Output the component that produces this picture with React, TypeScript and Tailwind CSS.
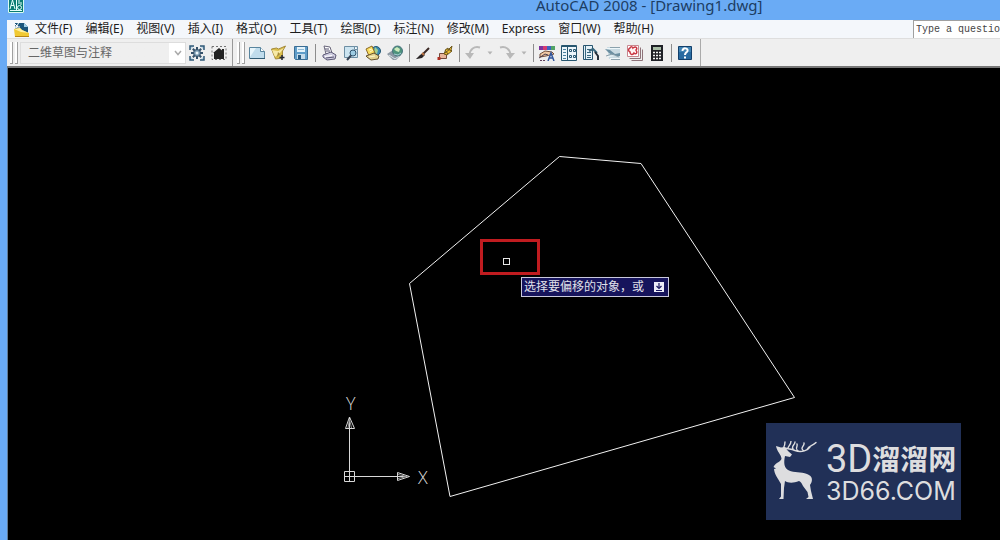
import type { ReactNode } from "react";

const menus = [
  "文件(F)",
  "编辑(E)",
  "视图(V)",
  "插入(I)",
  "格式(O)",
  "工具(T)",
  "绘图(D)",
  "标注(N)",
  "修改(M)",
  "Express",
  "窗口(W)",
  "帮助(H)",
];

function Icon({ children }: { children: ReactNode }) {
  return (
    <svg viewBox="0 0 16 16" className="size-4 shrink-0" fill="none" aria-hidden="true">
      {children}
    </svg>
  );
}

function Tool({ label, children }: { label: string; children: ReactNode }) {
  return (
    <button type="button" aria-label={label} className="flex h-6 w-[22px] shrink-0 items-center justify-center">
      {children}
    </button>
  );
}

function Drop({ label }: { label: string }) {
  return (
    <button type="button" aria-label={label} className="flex h-6 w-3 shrink-0 items-center justify-center">
      <svg viewBox="0 0 6 4" className="h-1 w-1.5" aria-hidden="true">
        <path d="M0.5 0.5h5L3 3.5z" fill="#b4b4b4" />
      </svg>
    </button>
  );
}

function Separator() {
  return (
    <span className="flex w-1.5 shrink-0 justify-center">
      <span className="h-[18px] w-px bg-[#8c8c8c]" />
    </span>
  );
}

function Grip() {
  return (
    <span className="flex shrink-0 gap-0.5">
      <span className="h-[22px] w-[3px] border-r border-b border-[#a0a0a0] bg-white" />
      <span className="h-[22px] w-[3px] border-r border-b border-[#a0a0a0] bg-white" />
    </span>
  );
}

function AppIcon() {
  return (
    <svg viewBox="0 0 16 13" className="h-[13px] w-4" aria-hidden="true">
      <path d="M0 0h16v13H0z" fill="#0b7c73" />
      <path d="M0.5 0v12.5h15V0" fill="none" stroke="#d9fbf4" />
      <path d="M2 9 4.500 0 7 9M3 5.500h3M8.500 0v10M2 10.500h12M11 0v4M13 2v3" stroke="#e6fffa" fill="none" />
      <circle cx="11.500" cy="7.500" r="2" stroke="#e6fffa" fill="#0b7c73" />
    </svg>
  );
}

function DrawingIcon() {
  return (
    <svg viewBox="0 0 15 15" className="size-[15px] shrink-0" aria-hidden="true">
      <path d="M1 1h9l4 4v8H2z" fill="#1b557c" />
      <path d="M10 1v4h4z" fill="#9fd0e8" />
      <path d="M1 2l3 3M5 0 2 6M1 5h5" stroke="#fff" />
      <path d="M0 7l6-1 2 2 7 3v4H1z" fill="#f0c933" />
      <path d="M0 7l6-1 2 2 7 3-8-1z" fill="#fff0a0" />
      <path d="M1 14.500h14" stroke="#b98516" />
    </svg>
  );
}

function StandardTools() {
  return (
    <div className="flex items-center">
      <Tool label="新建">
        <Icon>
          <path d="M0.500 2.500h11l4 4v7H0.500z" fill="#c0dcec" stroke="#59859e" />
          <path d="M1 3h6L1 12z" fill="#e8f5fb" />
          <path d="M11.500 2.500v4h4" fill="#fff" stroke="#59859e" />
          <path d="M1 13.500h15" stroke="#315b74" />
        </Icon>
      </Tool>
      <Tool label="打开">
        <Icon>
          <path d="M0.500 4l5-1 2 1 7-3-3 5 0 7-7 1z" fill="#d9bd4b" stroke="#a58a3a" />
          <path d="M1 5l6 1 6-3-4 5-5 4z" fill="#f7e9a6" />
          <path d="M7 7l2 2-3 3z" fill="#a58a3a" />
          <path d="M11 10v5M8.500 12.500h5" stroke="#232733" strokeWidth="1.500" />
        </Icon>
      </Tool>
      <Tool label="保存">
        <Icon>
          <path d="M1.500 1.500h13v13h-12l-1-1z" fill="#5f9dc9" stroke="#3a6d94" />
          <path d="M4 2h8v5H4z" fill="#e4f3fb" />
          <path d="M4 9h8v5H4z" fill="#c5dbea" />
          <path d="M5 10h3v4H5z" fill="#245982" />
          <path d="M5 4.500h6" stroke="#90bad5" />
        </Icon>
      </Tool>
      <Separator />
      <Tool label="打印">
        <Icon>
          <path d="M3 1l6 1 2 6-6 1z" fill="#fff" stroke="#686579" />
          <path d="M2 10l8-3 5 3-1 4-8 1-4-3z" fill="#cfcde0" stroke="#5a5774" />
          <path d="M4 4h4M5 6h4M5 13l8-1" stroke="#55516f" />
          <path d="M4 11.500l7-1" stroke="#fff" />
        </Icon>
      </Tool>
      <Tool label="打印预览">
        <Icon>
          <path d="M1.500 1.500h13v11h-13z" fill="#cce4f0" stroke="#6d8ea3" />
          <path d="M11.500 1.500v3h3" fill="#fff" stroke="#6d8ea3" />
          <circle cx="10" cy="8" r="3" fill="#9dcbe2" stroke="#31536d" />
          <path d="M8 10.500 4 15" stroke="#364355" strokeWidth="2" />
        </Icon>
      </Tool>
      <Tool label="发布">
        <Icon>
          <circle cx="11" cy="6" r="4.500" fill="#3888b1" stroke="#245874" />
          <path d="M10 2l3 3-1 4-3-2z" fill="#a3cf90" />
          <path d="M1 4l6-3 3 7-6 3z" fill="#f9dc5e" stroke="#8b6925" />
          <path d="M1 11l8-3 5 3-1 3-7 1-4-3z" fill="#e3d28f" stroke="#65512b" />
          <path d="M4 5l3-1M5 7l3-2M4 12l6-1" stroke="#fff7cc" />
        </Icon>
      </Tool>
      <Tool label="三维 DWF">
        <Icon>
          <path d="M0 9l6-4 8 5-5 5H6z" fill="#8d98a3" />
          <path d="M2 10l6 4 4-3" stroke="#dbe7eb" />
          <circle cx="10.500" cy="6" r="5" fill="#4e937c" stroke="#4b7480" />
          <path d="M7 4l3-2 3 2-1 3-3-1z" fill="#cdeabd" />
          <path d="M7 9l4 1 3-2" stroke="#a7cfd6" />
        </Icon>
      </Tool>
      <Separator />
      <Tool label="特性匹配">
        <Icon>
          <path d="M14 3 8 9" stroke="#3b2925" strokeWidth="2" />
          <path d="M8 8l2 2-3 3-5 1H1l4-4z" fill="#292425" />
          <path d="M7 8l2 2" stroke="#be7544" strokeWidth="2" />
        </Icon>
      </Tool>
      <Tool label="块编辑器">
        <Icon>
          <path d="M2.500 8.500h7v5h-7z" fill="#e8b59b" stroke="#72483b" />
          <path d="M0.500 12h3v3h-3z" fill="#af2f23" />
          <path d="M7 9l2-5 3 0 3-3-1 4 1 1-5 4z" fill="#edbd31" stroke="#6d581e" />
          <path d="M8 8l5-4M10 3l4 3M8 5l3 4" stroke="#6d581e" />
        </Icon>
      </Tool>
      <Separator />
      <Tool label="放弃">
        <Icon>
          <path d="M15 2.500C9 1 5 4 4.500 10" stroke="#b9b9b9" strokeWidth="2" />
          <path d="M0 8l5 6 4-6z" fill="#b9b9b9" />
        </Icon>
      </Tool>
      <Drop label="放弃列表" />
      <Tool label="重做">
        <Icon>
          <path d="M1 2.500c6-1.500 10 1.500 10.500 7.500" stroke="#b9b9b9" strokeWidth="2" />
          <path d="M16 8l-5 6-4-6z" fill="#b9b9b9" />
        </Icon>
      </Tool>
      <Drop label="重做列表" />
      <Separator />
      <Tool label="特性">
        <Icon>
          <path d="M0 1h4v4H0z" fill="#7c329e" />
          <path d="M4 1h4v4H4z" fill="#d23b72" />
          <path d="M8 1h4v4H8z" fill="#3c63c0" />
          <path d="M12 1h4v4h-4z" fill="#52a366" />
          <path d="M1 9l5-3 7 1 2 2-8 2-6 1z" fill="#f0c9a4" stroke="#74503d" />
          <path d="M0 13l6-4 3 1" stroke="#4b3d4d" />
          <path d="M9 16l3-8 3 8M10 13h4" stroke="#30549c" strokeWidth="1.500" />
          <path d="M1 15.500h6" stroke="#60405c" strokeDasharray="2 1" />
        </Icon>
      </Tool>
      <Tool label="设计中心">
        <Icon>
          <path d="M.5 .5h15v15H.5z" fill="#ecf5fa" stroke="#27566f" />
          <path d="M6.500 1v14M1 1.500h15" stroke="#27566f" />
          <path d="M2 4.500h3M2 7.500h3M2 10.500h3M2 13.500h3" stroke="#4a829f" />
          <path d="M8.500 4.500h2v2h-2zM12.500 4.500h2v2h-2zM8.500 10.500h2v2h-2zM12.500 10.500h2v2h-2z" stroke="#275670" />
        </Icon>
      </Tool>
      <Tool label="工具选项板">
        <Icon>
          <path d="M.5 .5h9v14h-9z" fill="#e5f1f8" stroke="#275570" />
          <path d="M2.500 1v13M4 4.500h4M4 7.500h4M4 10.500h4M4 12.500h4" stroke="#39677e" />
          <path d="M6 6l4-2 4 4" stroke="#39677e" strokeWidth="2" />
          <path d="M12 7l3 4v4" stroke="#27303b" strokeWidth="2" />
        </Icon>
      </Tool>
      <Tool label="图纸集管理器">
        <Icon>
          <path d="M2 2h13v12H4z" fill="#c9dae2" />
          <path d="M0 4l5 1 5 4 5-1v3H9L4 8z" fill="#698da0" />
          <path d="M2 3.500h13M3 11.500l7-1M5 13.500h10" stroke="#eef7fa" />
          <path d="M5 2.500h10M1 11l6-2 7 3M6 14.500h9" stroke="#8ba1ac" />
        </Icon>
      </Tool>
      <Tool label="标记集管理器">
        <Icon>
          <path d="M2.500 13.500h11v-11M4.500 15.500h11v-11" stroke="#8e7278" />
          <path d="M.5 .5h11v11H.5z" fill="#fff" stroke="#c9868e" />
          <path d="M3 3c1-2 3-1 3 0 3-2 5 0 3 2 2 3 0 5-2 3-2 3-4 1-4-1-2-1-2-3 0-4z" fill="#fff4f4" stroke="#c93642" strokeWidth="1.500" />
        </Icon>
      </Tool>
      <Tool label="快速计算器">
        <Icon>
          <path d="M2 0h12v16H2z" fill="#202127" />
          <path d="M4 2h8v3H4z" fill="#a9bda6" />
          <path d="M4 7.500h8M4 10.500h8M4 13.500h8" stroke="#f5f5f5" strokeWidth="1.500" strokeDasharray="2 1" />
        </Icon>
      </Tool>
      <Separator />
      <Tool label="帮助">
        <Icon>
          <path d="M1.500 1.500h13v13h-13z" fill="#286aa0" stroke="#123f6b" />
          <path d="M2 2h12v5H2z" fill="#3f82b2" />
          <path d="M5.500 6c0-4 6-3 5 0-.5 1.500-2.500 1.500-2.500 4M8 11.500v2" stroke="#fff" strokeWidth="2" />
        </Icon>
      </Tool>
    </div>
  );
}

function Deer() {
  return (
    <svg viewBox="0 0 46 62" className="h-[62px] w-[46px] shrink-0" aria-hidden="true">
      <path
        d="M3 5 8 6.500 12 6 15 10 19 13.500 17 16 12 15C10.500 22 11 27 16 29.500 21 32 28 30.500 34 33 40 35 40 40 37 44L38 50 40 58H33L35.500 56 34.500 51 30 45C28.500 42 28 41 26 40 20 42.500 15 42 12 40L11 47 10.500 58H6L8 55.500 8 43C5 37 1.500 34 1 28L3 27.500.5 26C3 21 8 21 8.500 17.500 8 13 4 11 3 5z"
        fill="#dddddf"
      />
      <path
        d="M11 7C16 8 19 8 22 9.500 29 12 35 9 37 6M10.500 7C12 4 12 3 12 1M15 7.500C15 5 18 4 18 0M20 8C18 5 22 4 22 1M26 10.500C21 8 25 6 24 3M31 10C26 7 32 5 31 2M34 8.500C36 4 40 5 43 1.500"
        fill="none"
        stroke="#dddddf"
        strokeWidth="1.400"
        strokeLinecap="round"
      />
    </svg>
  );
}

function DrawingCanvas() {
  return (
    <main className="relative min-h-[472px] flex-1 overflow-hidden bg-black">
      <svg className="absolute top-0 left-0 h-[472px] w-[992px]" viewBox="8 68 992 472" fill="none" aria-label="模型空间">
        <path d="M559.500 156.500 641 163.500 794.500 397.500 450 496.500 409.500 283.500z" stroke="#f2f2f2" />
        <g stroke="#d8d8d8">
          <path d="M349.500 481V429M345 476.500h52M344.500 471.500h10v10h-10z" />
          <path d="M349.500 417 345.500 428.500h9zM349.500 418v10M397.500 472.500v8l12-4zM398 476.500h9" />
          <path d="M348 428l1.500-9 2 9M398 474.500l9 2-9 2" stroke="#8f8f8f" />
        </g>
      </svg>
      <span className="absolute top-[327px] left-[338px] font-['Open_Sans',sans-serif] text-lg leading-4 font-light text-[#d8d8d8]">Y</span>
      <span className="absolute top-[401px] left-[410px] font-['Open_Sans',sans-serif] text-lg leading-4 font-light text-[#d8d8d8]">X</span>
      <div className="absolute top-[171px] left-[472px] flex h-[36px] w-[60px] border-[3px] border-[#c01c20]">
        <span className="mt-4 ml-5 size-[7px] border border-[#e8e8e8]" />
      </div>
      <div className="absolute top-[209px] left-[513px] flex h-5 w-[148px] items-center justify-between border border-[#c9c9dd] bg-[#16145c] pr-1 pl-0.5 text-xs text-[#e0e0ea]">
        <span className="whitespace-nowrap">选择要偏移的对象，或</span>
        <svg viewBox="0 0 10 10" className="size-[10px] shrink-0" aria-hidden="true">
          <path d="M0 0h10v10H0z" fill="#ededf8" />
          <path d="M5 1v4M2.500 4 5 6.500 7.500 4M2 8.500h6" stroke="#16145c" fill="none" strokeWidth="1.200" />
        </svg>
      </div>
      <div className="absolute right-[39px] bottom-5 flex h-[97px] w-[195px] items-start bg-[#213057] pt-4 pl-[7px] text-[#dddddf]">
        <div className="pt-0.5">
          <Deer />
        </div>
        <div className="ml-[7px] whitespace-nowrap">
          <div className="flex h-10 items-center">
            <span className="font-[Roboto,sans-serif] text-[38px] leading-10">3D</span>
            <span className="text-[28px] leading-10 font-bold">溜溜网</span>
          </div>
          <div className="font-[Inter,sans-serif] text-[25px] leading-6">3D66.COM</div>
        </div>
      </div>
    </main>
  );
}

export default function App() {
  return (
    <div className="flex min-h-screen flex-col overflow-hidden bg-[#6aabf5] font-['Noto_Sans','Noto_Sans_CJK_SC',sans-serif] text-xs text-[#1c1c1c]">
      <header className="flex h-5 items-start overflow-hidden pl-2">
        <AppIcon />
        <h1 className="ml-[512px] -mt-[5px] text-[15px] leading-5 whitespace-nowrap text-[#1d3d63]">AutoCAD 2008 - [Drawing1.dwg]</h1>
      </header>
      <div className="flex flex-1 flex-col border-l-[7px] border-[#6aabf5]">
        <nav className="flex h-[18px] items-center bg-[#f4f7fb] pl-[7px]">
          <DrawingIcon />
          <div className="ml-1.5 flex gap-[13px]">
            {menus.map((menu) => (
              <button key={menu} type="button" className="leading-[18px] whitespace-nowrap">
                {menu}
              </button>
            ))}
          </div>
          <input
            type="text"
            aria-label="Type a question for help"
            placeholder="Type a question for help"
            className="ml-auto h-[18px] w-[87px] border-t border-l border-[#a0a0a0] bg-white pl-0.5 font-['Liberation_Mono',monospace] text-[10px] text-[#444] outline-none placeholder:text-[#444]"
          />
        </nav>
        <div className="flex h-[30px] items-center border-t border-b-2 border-t-[#dedede] border-b-[#777] bg-[#efefef]">
          <div className="flex h-[27px] items-center border-r border-[#999] pl-[3px]">
            <Grip />
            <div className="relative ml-0.5 flex items-center">
              <select
                aria-label="工作空间"
                disabled
                className="h-[22px] w-[166px] appearance-none border border-[#ddd] bg-linear-to-r from-[#efefef] from-90% to-white to-90% pl-[7px] text-xs text-[#666] opacity-100"
              >
                <option>二维草图与注释</option>
              </select>
              <svg viewBox="0 0 8 6" className="pointer-events-none absolute right-1 h-1.5 w-2" fill="none" aria-hidden="true">
                <path d="M1 1l3 3.500L7 1" stroke="#aaa" strokeWidth="1.500" />
              </svg>
            </div>
            <Tool label="工作空间设置">
              <Icon>
                <path d="M1 5V1h4M11 1h4v4M15 11v4h-4M5 15H1v-4" fill="#b7d1e2" stroke="#315978" strokeWidth="1.500" />
                <path d="M8 2v12M2 8h12M3.800 3.800l8.400 8.400M12.200 3.800l-8.400 8.400" stroke="#35516a" strokeWidth="2" />
                <circle cx="8" cy="8" r="3.500" fill="#7c9cb2" stroke="#35516a" />
                <circle cx="8" cy="8" r="1.500" fill="#eef6fb" />
              </Icon>
            </Tool>
            <Tool label="我的工作空间">
              <Icon>
                <path d="M1 1.500h14v13H1z" stroke="#737373" strokeDasharray="2 2" />
                <path d="M2 8l6-5 5 4v7H3V8z" fill="#222" />
                <path d="M11 4h2v4h-2z" fill="#222" />
              </Icon>
            </Tool>
            <span className="w-0.5" />
          </div>
          <div className="flex h-[27px] items-center border-r border-[#aaa] pr-1 pl-1">
            <Grip />
            <span className="w-px" />
            <StandardTools />
          </div>
        </div>
        <div className="flex flex-1 flex-col border-l border-[#607a94]">
          <DrawingCanvas />
        </div>
      </div>
    </div>
  );
}
